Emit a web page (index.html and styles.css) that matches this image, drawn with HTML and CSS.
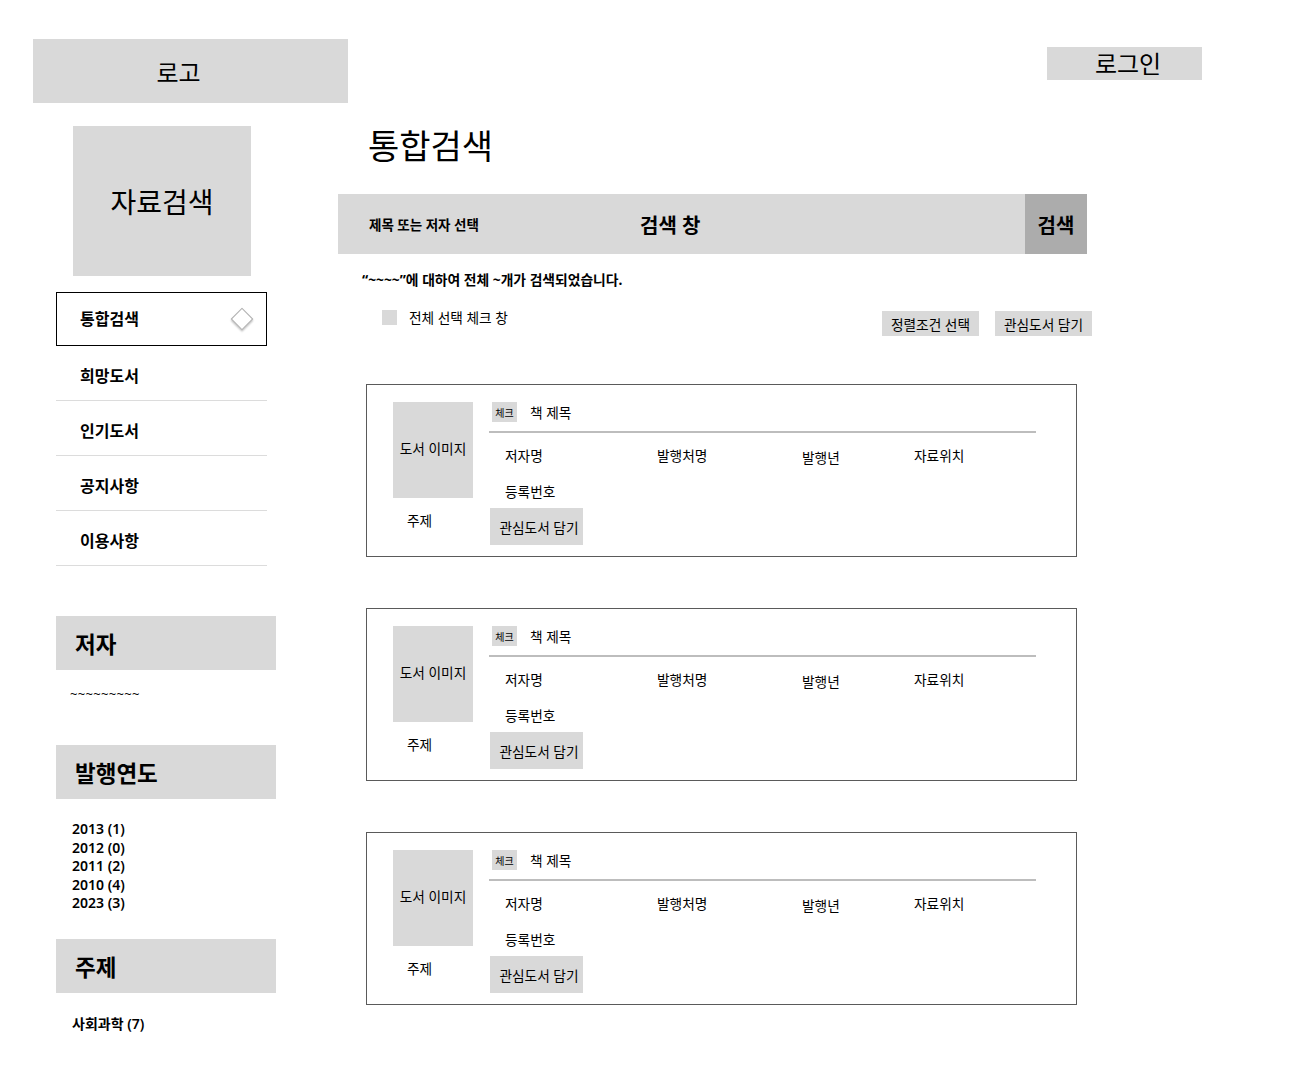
FILE: index.html
```html
<!DOCTYPE html>
<html lang="ko">
<head>
    <meta charset="UTF-8">
    <title>통합검색</title>
    <link rel="stylesheet" href="styles.css">
</head>
<body>

<div class="header">
    <div class="logo">로고</div>
    <div class="login">로그인</div>
</div>

<div class="layout">
    <div class="sidebar">
        <div class="side-title">자료검색</div>

        <ul class="menu">
            <li class="active">통합검색 <span class="diamond"></span></li>
            <li>희망도서</li>
            <li>인기도서</li>
            <li>공지사항</li>
            <li>이용사항</li>
        </ul>

        <div class="filter first">
            <div class="filter-title">저자</div>
            <div class="filter-body tilde">~~~~~~~~~</div>
        </div>
        <div class="filter">
            <div class="filter-title">발행연도</div>
            <div class="filter-body years">
                <div>2013 (1)</div>
                <div>2012 (0)</div>
                <div>2011 (2)</div>
                <div>2010 (4)</div>
                <div>2023 (3)</div>
            </div>
        </div>
        <div class="filter">
            <div class="filter-title">주제</div>
            <div class="filter-body">사회과학 (7)</div>
        </div>
    </div>

    <div class="main">
        <h1>통합검색</h1>

        <div class="search-bar">
            <div class="search-type">제목 또는 저자 선택</div>
            <div class="search-input">검색 창</div>
            <div class="search-btn">검색</div>
        </div>

        <p class="result-count">“~~~~”에 대하여 전체 ~개가 검색되었습니다.</p>

        <div class="toolbar">
            <div class="select-all"><span class="check"></span>전체 선택 체크 창</div>
            <div class="tool-btns">
                <span class="btn">정렬조건 선택</span>
                <span class="btn">관심도서 담기</span>
            </div>
        </div>

        <div class="card">
            <div class="card-left">
                <div class="book-img">도서 이미지</div>
                <div class="subject">주제</div>
            </div>
            <div class="card-right">
                <div class="title-row"><span class="mini-check">체크</span>책 제목</div>
                <div class="info-row">
                    <span class="c1">저자명</span><span class="c2">발행처명</span><span class="c3">발행년</span><span>자료위치</span>
                </div>
                <div class="info-row reg">등록번호</div>
                <span class="card-btn">관심도서 담기</span>
            </div>
        </div>

        <div class="card">
            <div class="card-left">
                <div class="book-img">도서 이미지</div>
                <div class="subject">주제</div>
            </div>
            <div class="card-right">
                <div class="title-row"><span class="mini-check">체크</span>책 제목</div>
                <div class="info-row">
                    <span class="c1">저자명</span><span class="c2">발행처명</span><span class="c3">발행년</span><span>자료위치</span>
                </div>
                <div class="info-row reg">등록번호</div>
                <span class="card-btn">관심도서 담기</span>
            </div>
        </div>

        <div class="card">
            <div class="card-left">
                <div class="book-img">도서 이미지</div>
                <div class="subject">주제</div>
            </div>
            <div class="card-right">
                <div class="title-row"><span class="mini-check">체크</span>책 제목</div>
                <div class="info-row">
                    <span class="c1">저자명</span><span class="c2">발행처명</span><span class="c3">발행년</span><span>자료위치</span>
                </div>
                <div class="info-row reg">등록번호</div>
                <span class="card-btn">관심도서 담기</span>
            </div>
        </div>
    </div>
</div>

</body>
</html>
```

FILE: styles.css
```css
body {
    margin: 0;
    font-family: "Noto Sans", "Noto Sans CJK KR", sans-serif;
    color: #000;
    background: #fff;
}

/* header */
.header {
    display: flex;
    justify-content: space-between;
    align-items: flex-start;
    padding: 39px 95px 0 33px;
}
.logo {
    width: 315px;
    height: 64px;
    box-sizing: border-box;
    padding-right: 24px;
    background: #d9d9d9;
    display: flex;
    align-items: center;
    justify-content: center;
    font-size: 24px;
}
.login {
    width: 155px;
    height: 33px;
    box-sizing: border-box;
    padding-left: 7px;
    margin-top: 8px;
    background: #d9d9d9;
    display: flex;
    align-items: center;
    justify-content: center;
    font-size: 24px;
    line-height: 1;
}

.layout {
    display: flex;
    padding-left: 56px;
}

/* sidebar */
.sidebar {
    width: 220px;
    flex-shrink: 0;
}
.side-title {
    width: 178px;
    height: 150px;
    margin: 23px 0 0 17px;
    background: #d9d9d9;
    display: flex;
    align-items: center;
    justify-content: center;
    font-size: 28px;
}
.menu {
    list-style: none;
    margin: 16px 0 0;
    padding: 0;
    width: 211px;
}
.menu li {
    height: 55px;
    box-sizing: border-box;
    padding: 4px 0 0 24px;
    display: flex;
    align-items: center;
    font-size: 16px;
    font-weight: bold;
    border-bottom: 1px solid #dcdcdc;
    position: relative;
}
.menu li.active {
    height: 54px;
    border: 1.5px solid #000;
    padding: 0 0 3px 23px;
}
.diamond {
    position: absolute;
    right: 16px;
    top: 18px;
    width: 14px;
    height: 14px;
    background: #fff;
    border: 1px solid #aaa;
    transform: rotate(45deg);
    box-shadow: 1px 1px 2px rgba(0, 0, 0, 0.25);
}

.filter.first {
    margin-top: 50px;
}
.filter-title {
    height: 54px;
    background: #d9d9d9;
    display: flex;
    align-items: center;
    padding-left: 19px;
    font-size: 22.5px;
    font-weight: bold;
}
.filter-body {
    padding: 20px 0 0 16px;
    font-size: 14px;
    font-weight: 600;
}
.filter-body.tilde {
    padding: 15px 0 0 14px;
    height: 60px;
    font-size: 13px;
    font-weight: normal;
    letter-spacing: 0.3px;
}
.filter-body.years {
    padding-top: 21px;
    height: 119px;
    line-height: 18.6px;
}

/* main */
.main {
    margin-left: 62px;
    width: 760px;
}
h1 {
    margin: 19px 0 0 30px;
    font-size: 34px;
    font-weight: normal;
    line-height: 48px;
}
.search-bar {
    margin-top: 24px;
    width: 749px;
    height: 60px;
    background: #d9d9d9;
    display: flex;
    align-items: center;
}
.search-type {
    width: 227px;
    padding-left: 31px;
    font-size: 13.5px;
    font-weight: bold;
}
.search-input {
    flex: 1;
    padding-left: 44px;
    font-size: 20px;
    font-weight: bold;
}
.search-btn {
    width: 62px;
    height: 60px;
    background: #acacac;
    display: flex;
    align-items: center;
    justify-content: center;
    font-size: 20px;
    font-weight: bold;
}
.result-count {
    margin: 16px 0 0 24px;
    font-size: 13.8px;
    font-weight: bold;
    line-height: 20px;
}
.toolbar {
    display: flex;
    justify-content: space-between;
    align-items: flex-start;
    margin-top: 17px;
    width: 754px;
}
.select-all {
    display: flex;
    align-items: center;
    margin-left: 44px;
    font-size: 13.7px;
}
.check {
    width: 15px;
    height: 15px;
    background: #d9d9d9;
    margin-right: 12px;
}
.tool-btns {
    display: flex;
    gap: 16px;
    margin-top: 4px;
}
.btn {
    width: 97px;
    height: 25px;
    background: #d9d9d9;
    display: flex;
    align-items: center;
    justify-content: center;
    font-size: 13.7px;
}

/* result cards */
.card {
    margin: 48px 0 0 28px;
    width: 711px;
    height: 173px;
    box-sizing: border-box;
    border: 1px solid #5a5a5a;
    display: flex;
    padding: 17px 0 0 26px;
    font-size: 13.7px;
}
.card + .card {
    margin-top: 51px;
}
.card-left {
    width: 96px;
}
.book-img {
    width: 80px;
    height: 96px;
    box-sizing: border-box;
    padding-bottom: 4px;
    background: #d9d9d9;
    display: flex;
    align-items: center;
    justify-content: center;
}
.subject {
    padding: 12px 0 0 14px;
}
.card-right {
    width: 547px;
}
.title-row {
    display: flex;
    align-items: center;
    padding: 0 0 9px 3px;
    border-bottom: 2px solid #bdbdbd;
}
.mini-check {
    width: 25px;
    height: 20px;
    background: #d9d9d9;
    display: inline-flex;
    align-items: center;
    justify-content: center;
    font-size: 10px;
    margin-right: 13px;
}
.info-row {
    display: flex;
    padding: 12px 0 0 16px;
    height: 24px;
}
.info-row .c1 { width: 152px; }
.info-row .c2 { width: 145px; }
.info-row .c3 { width: 112px; padding-top: 2px; }
.info-row.reg {
    padding-top: 12px;
    height: 19px;
    margin-bottom: 8px;
}
.card-btn {
    display: inline-flex;
    align-items: center;
    justify-content: center;
    box-sizing: border-box;
    padding-left: 5px;
    width: 93px;
    height: 37px;
    margin-left: 1px;
    background: #d9d9d9;
}
```
